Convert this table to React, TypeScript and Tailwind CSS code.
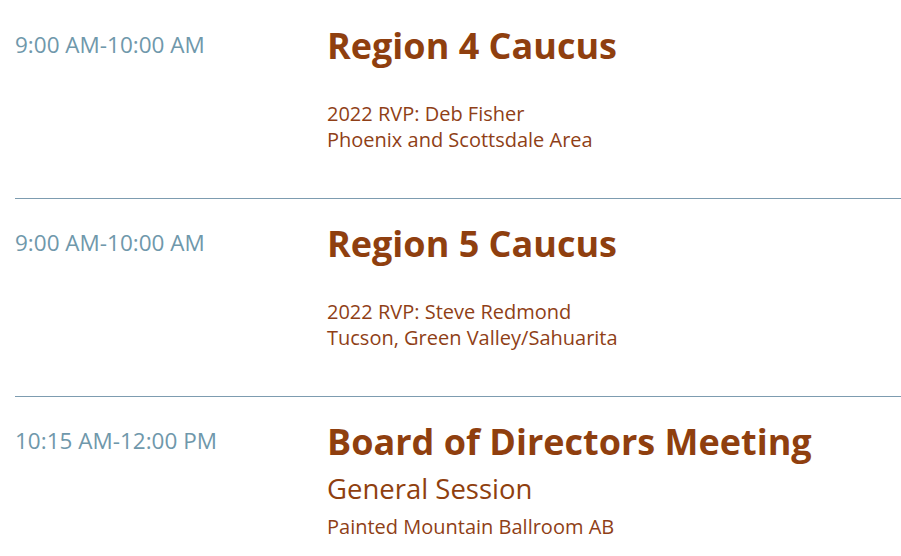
const sessions = [
  {
    time: "9:00 AM-10:00 AM",
    title: "Region 4 Caucus",
    lines: ["2022 RVP: Deb Fisher", "Phoenix and Scottsdale Area"],
  },
  {
    time: "9:00 AM-10:00 AM",
    title: "Region 5 Caucus",
    lines: ["2022 RVP: Steve Redmond", "Tucson, Green Valley/Sahuarita"],
  },
  {
    time: "10:15 AM-12:00 PM",
    title: "Board of Directors Meeting",
    subtitle: "General Session",
    lines: ["Painted Mountain Ballroom AB"],
  },
];

export default function App() {
  return (
    <div className="min-h-screen bg-white pl-[15px] pt-px font-['Open_Sans',sans-serif]">
      {sessions.map((s, i) => (
        <div
          key={i}
          className="flex border-b border-[#7d9cb0] pt-[23px] pb-[45px]"
        >
          <div className="w-[312px] shrink-0 pt-[6px] text-[22.5px] leading-[30px] text-[#6f98ab]">
            {s.time}
          </div>
          <div className="flex-1">
            <h2 className="text-[36px] font-bold leading-[44px] text-[#8f3f0f]">
              {s.title}
            </h2>
            {s.subtitle ? (
              <>
                <div className="mt-[7px] text-[27.5px] leading-[36px] text-[#8f3f0f]">
                  {s.subtitle}
                </div>
                <div className="mt-[7px] text-[20px] leading-[26px] text-[#8f3f17]">
                  {s.lines.map((l) => (
                    <div key={l}>{l}</div>
                  ))}
                </div>
              </>
            ) : (
              <div className="mt-[33px] text-[20px] leading-[26px] text-[#8f3f17]">
                {s.lines.map((l) => (
                  <div key={l}>{l}</div>
                ))}
              </div>
            )}
          </div>
        </div>
      ))}
    </div>
  );
}
